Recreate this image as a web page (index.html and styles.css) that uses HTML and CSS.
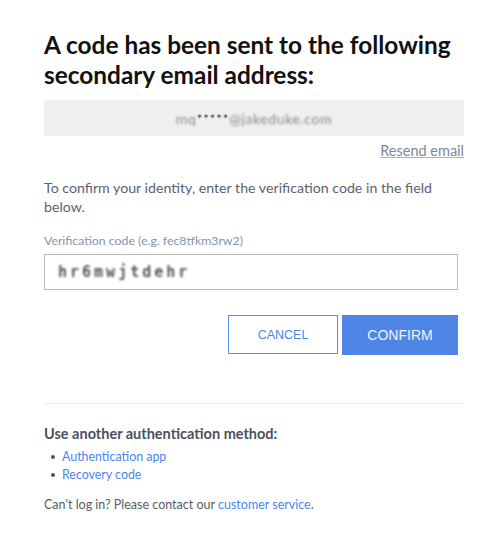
FILE: index.html
```html
<!DOCTYPE html>
<html>
<head>
<meta charset="utf-8">
<link rel="stylesheet" href="styles.css">
</head>
<body>
<main class="page">
  <h1 class="title">A code has been sent to the following secondary email address:</h1>
  <div class="email-box"><span class="blur">mq</span>*****<span class="blur">@jakeduke.com</span></div>
  <div class="resend-row"><a class="resend" href="#">Resend email</a></div>
  <p class="intro">To confirm your identity, enter the verification code in the field below.</p>
  <label class="label">Verification code (e.g. fec8tfkm3rw2)</label>
  <div class="input"><span class="code">hr6mwjtdehr</span></div>
  <div class="actions">
    <button class="btn btn-cancel">CANCEL</button>
    <button class="btn btn-confirm">CONFIRM</button>
  </div>
  <hr class="divider">
  <h2 class="alt-title">Use another authentication method:</h2>
  <ul class="alt-list">
    <li><a href="#">Authentication app</a></li>
    <li><a href="#">Recovery code</a></li>
  </ul>
  <p class="help">Can't log in? Please contact our <a href="#">customer service</a>.</p>
</main>
</body>
</html>
```

FILE: styles.css
```css
* { box-sizing: border-box; }
body {
  margin: 0;
  background: #fff;
  font-family: "Lato", "Noto Sans", sans-serif;
  color: #555c68;
}
.page {
  width: 420px;
  margin-left: 44px;
  padding-top: 30px;
}
.title {
  margin: 0;
  font-size: 24.4px;
  line-height: 30px;
  font-weight: 700;
  color: #111;
}
.email-box {
  margin-top: 10px;
  height: 36px;
  background: #efefef;
  border-radius: 3px;
  display: flex;
  align-items: center;
  justify-content: center;
  font-size: 14px;
  letter-spacing: 0.6px;
  color: #555;
}
.blur { filter: blur(1.3px); color: #8a8a8a; }
.resend-row {
  display: flex;
  justify-content: flex-end;
  margin-top: 7px;
  line-height: 16px;
}
.resend {
  font-size: 14.5px;
  color: #7d8898;
  text-decoration: underline;
  text-decoration-color: #aab3c0;
}
.intro {
  margin: 19px 0 0;
  font-size: 14.2px;
  line-height: 19px;
  color: #5a6270;
}
.label {
  display: block;
  margin-top: 18px;
  font-size: 12.3px;
  line-height: 14px;
  color: #8794a6;
}
.input {
  margin-top: 6px;
  width: 414px;
  height: 36px;
  border: 1px solid #b9b9b9;
  display: flex;
  align-items: center;
  padding-left: 13px;
}
.code {
  font-family: "DejaVu Sans Mono", monospace;
  font-weight: 700;
  font-size: 15px;
  color: #555;
  filter: blur(0.9px);
  letter-spacing: 3px;
}
.actions {
  display: flex;
  justify-content: flex-end;
  gap: 4px;
  margin-top: 25px;
  width: 414px;
}
.btn {
  height: 39px;
  font-family: "Liberation Sans", Arial, sans-serif;
  font-size: 12.5px;
  border-radius: 0;
  cursor: pointer;
}
.btn-cancel {
  width: 110px;
  background: #fff;
  border: 1px solid #5b8fea;
  color: #4a86ec;
}
.btn-confirm {
  width: 116px;
  height: 40px;
  background: #4f86e6;
  border: none;
  color: #eef3fd;
  font-size: 14px;
}
.divider {
  margin: 48px 0 0;
  border: none;
  border-top: 1px solid #ececec;
}
.alt-title {
  margin: 21px 0 0;
  font-size: 14.5px;
  line-height: 18px;
  font-weight: 700;
  color: #4b515c;
}
.alt-list {
  list-style: none;
  margin: 5px 0 0;
  padding-left: 18px;
  font-size: 12.4px;
  line-height: 18px;
}
.alt-list li {
  display: flex;
  align-items: center;
}
.alt-list li::before {
  content: "";
  width: 4px;
  height: 4px;
  border-radius: 50%;
  background: #555;
  margin-left: -11px;
  margin-right: 7px;
}
a { color: #4a86f0; text-decoration: none; }
.help {
  margin: 12px 0 0;
  font-size: 12.5px;
  line-height: 18px;
  color: #555c68;
}
```
